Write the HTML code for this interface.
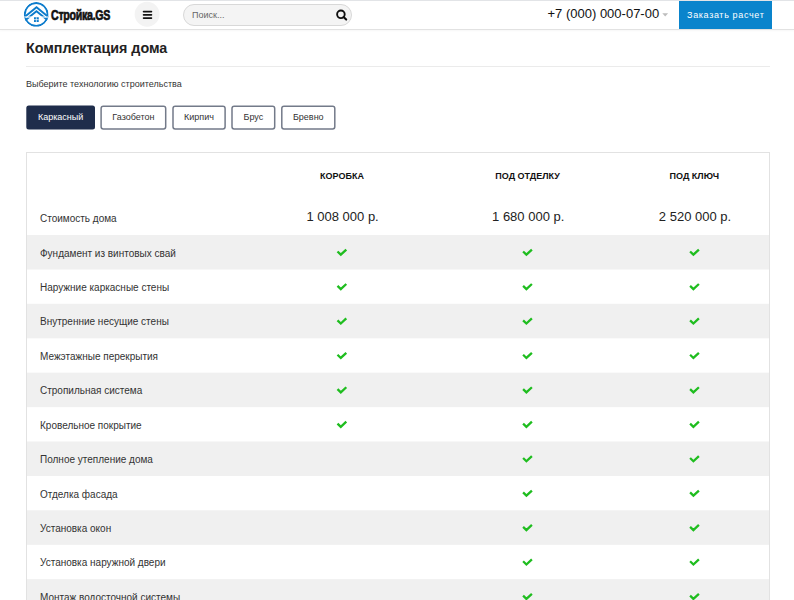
<!DOCTYPE html>
<html><head><meta charset="utf-8">
<style>
*{box-sizing:border-box;margin:0;padding:0}
html,body{width:794px;height:600px;overflow:hidden;background:#fff;font-family:"Liberation Sans",sans-serif;color:#222}
.a{position:absolute;white-space:nowrap}
.hdr{position:absolute;left:0;top:0;width:794px;height:30px;background:#fff;border-top:1px solid #e2e4e7;border-bottom:1px solid #e2e2e2;box-shadow:0 1px 2px rgba(0,0,0,0.035)}
.logo{position:absolute;left:22px;top:0px;width:30px;height:30px}
.logotxt{position:absolute;left:50.6px;top:5.1px;font-weight:bold;font-size:15.4px;line-height:20px;color:#111;transform:scaleX(0.69);transform-origin:0 0;white-space:nowrap;-webkit-text-stroke:0.7px #111;letter-spacing:-0.4px}
.burger{position:absolute;left:134.5px;top:1.8px;width:25.3px;height:25.3px;border-radius:50%;background:#f3f3f3}
.burger i{position:absolute;left:8px;width:9.6px;height:1.7px;border-radius:1px;background:#111}
.search{position:absolute;left:182.5px;top:4px;width:169.5px;height:22px;border:1px solid #d8d8d8;border-radius:11px;background:#f4f4f4}
.search span{position:absolute;left:8.5px;top:4.5px;font-size:9px;line-height:11px;color:#666}
.phone{position:absolute;left:547.5px;top:6px;font-size:13px;line-height:16px;color:#111;white-space:nowrap}
.caret{position:absolute;left:662.3px;top:13.2px;width:0;height:0;border-left:2.9px solid transparent;border-right:2.9px solid transparent;border-top:3.6px solid #b8b8b8}
.order{position:absolute;left:679px;top:1px;width:93px;height:28px;background:#0a84cc;color:#fff;font-size:9px;text-align:center;line-height:28px;letter-spacing:0.65px;padding-left:0.5px}
h1{position:absolute;left:26px;top:39px;font-size:14.3px;line-height:18px;font-weight:bold;color:#222;white-space:nowrap}
.hr{position:absolute;left:26px;top:66px;width:744px;height:1px;background:#ebebeb}
.sub{position:absolute;left:26px;top:79px;font-size:9px;line-height:11px;color:#333;white-space:nowrap}
.tab{position:absolute;top:105.4px;height:24.3px;font-size:9px;line-height:25.2px;text-align:center;color:#333;white-space:nowrap}
.tab.on{color:#fff}
.tbl{position:absolute;left:26px;top:152px;width:744px;height:470px;border:1px solid #e2e2e2;border-bottom:none}
.row{position:absolute;left:0;width:742px;height:34.4px}

.lbl{position:absolute;left:13px;font-size:10px;line-height:12px;color:#333;white-space:nowrap}
.hd{position:absolute;font-size:9px;line-height:11px;font-weight:bold;color:#111;transform:translateX(-50%);white-space:nowrap}
.pr{position:absolute;font-size:13px;line-height:16px;color:#222;transform:translateX(-50%);white-space:nowrap}
.ckw{position:absolute}
.ck{display:block}
.ov{position:absolute;left:0;top:0}
.tbl2{position:absolute;left:27px;top:153px;width:742px;height:460px}

</style></head><body>
<div class="hdr"></div>
<svg class="logo" width="30" height="30" viewBox="0 0 30 30">
  <defs><clipPath id="cc"><circle cx="14.2" cy="14.45" r="12.35"/></clipPath></defs>
  <g clip-path="url(#cc)">
    <circle cx="14.2" cy="14.45" r="11.45" fill="none" stroke="#0d7ccc" stroke-width="1.85"/>
    <path d="M-1 20 L14.5 7.25 L30 20" fill="none" stroke="#0d7ccc" stroke-width="1.9" stroke-linejoin="miter"/>
    <path d="M-1 23.6 L14.5 11.2 L30 23.6" fill="none" stroke="#0d7ccc" stroke-width="1.9" stroke-linejoin="miter"/>
    <rect x="0" y="16.5" width="30" height="1.1" fill="#fff"/>
  </g>
  <rect x="12" y="17.25" width="4.75" height="4.75" fill="#0d7ccc"/>
  <path d="M12 19.6 H16.75 M14.37 17.25 V22" stroke="#fff" stroke-width="0.7"/>
</svg>
<div class="logotxt">Стройка.GS</div>
<svg class="a" style="left:0;top:0" width="200" height="30" viewBox="0 0 200 30"><circle cx="147.1" cy="14.3" r="12.45" fill="#f3f3f3"/><path d="M143.6 11.5 H151.4 M143.6 14.75 H151.4 M143.6 18 H151.4" stroke="#111" stroke-width="1.75" stroke-linecap="round"/></svg>
<div class="search"><span>Поиск...</span>
  <svg style="position:absolute;left:151px;top:4.3px" width="14" height="13" viewBox="0 0 14 13"><circle cx="5.9" cy="5.3" r="3.8" fill="none" stroke="#111" stroke-width="1.9"/><path d="M8.6 8.1 L11.2 10.6" stroke="#111" stroke-width="2.1" stroke-linecap="round"/></svg>
</div>
<div class="phone">+7 (000) 000-07-00</div>
<svg class="a" style="left:661px;top:12px" width="9" height="6" viewBox="0 0 9 6"><path d="M1.3 1.2 H7.1 L4.2 4.6 Z" fill="#bdbdbd"/></svg>
<div class="order">Заказать расчет</div>

<h1>Комплектация дома</h1>
<div class="hr"></div>
<div class="sub">Выберите технологию строительства</div>
<svg class="ov" width="794" height="140" viewBox="0 0 794 140"><rect x="26.30" y="105.60" width="68.70" height="23.90" rx="2.5" fill="#1f2d4b"/><rect x="101.10" y="106.20" width="64.60" height="22.70" rx="2.2" fill="#fff" stroke="#737a89" stroke-width="1.5"/><rect x="173.00" y="106.20" width="52.10" height="22.70" rx="2.2" fill="#fff" stroke="#737a89" stroke-width="1.5"/><rect x="232.00" y="106.20" width="42.70" height="22.70" rx="2.2" fill="#fff" stroke="#737a89" stroke-width="1.5"/><rect x="281.80" y="106.20" width="53.00" height="22.70" rx="2.2" fill="#fff" stroke="#737a89" stroke-width="1.5"/></svg>
<div class="tab on" style="left:26.3px;width:68.7px">Каркасный</div>
<div class="tab" style="left:100.3px;width:66.2px">Газобетон</div>
<div class="tab" style="left:172.2px;width:53.7px">Кирпич</div>
<div class="tab" style="left:231.2px;width:44.3px">Брус</div>
<div class="tab" style="left:281.0px;width:54.6px">Бревно</div>


<div class="tbl"></div>
<svg class="ov" width="794" height="600" viewBox="0 0 794 600"><g fill="#f0f0f0"><rect x="27" y="234.95" width="742" height="34.55"/><rect x="27" y="303.79" width="742" height="34.55"/><rect x="27" y="372.63" width="742" height="34.55"/><rect x="27" y="441.47" width="742" height="34.55"/><rect x="27" y="510.31" width="742" height="34.55"/><rect x="27" y="579.15" width="742" height="34.55"/></g></svg>
<div class="tbl2">
<div class="hd" style="left:315px;top:18px">КОРОБКА</div>
<div class="hd" style="left:500.6px;top:18px">ПОД ОТДЕЛКУ</div>
<div class="hd" style="left:667.4px;top:18px">ПОД КЛЮЧ</div>
<div class="lbl" style="top:60.3px">Стоимость дома</div>
<div class="pr" style="left:315.6px;top:56px">1 008 000 р.</div>
<div class="pr" style="left:501.20000000000005px;top:56px">1 680 000 р.</div>
<div class="pr" style="left:668.0px;top:56px">2 520 000 р.</div>
<div class="row" style="top:82.00px">
<div class="lbl" style="top:12.6px">Фундамент из винтовых свай</div>
</div>
<div class="row" style="top:116.42px">
<div class="lbl" style="top:12.6px">Наружние каркасные стены</div>
</div>
<div class="row" style="top:150.84px">
<div class="lbl" style="top:12.6px">Внутренние несущие стены</div>
</div>
<div class="row" style="top:185.26px">
<div class="lbl" style="top:12.6px">Межэтажные перекрытия</div>
</div>
<div class="row" style="top:219.68px">
<div class="lbl" style="top:12.6px">Стропильная система</div>
</div>
<div class="row" style="top:254.10px">
<div class="lbl" style="top:12.6px">Кровельное покрытие</div>
</div>
<div class="row" style="top:288.52px">
<div class="lbl" style="top:12.6px">Полное утепление дома</div>
</div>
<div class="row" style="top:322.94px">
<div class="lbl" style="top:12.6px">Отделка фасада</div>
</div>
<div class="row" style="top:357.36px">
<div class="lbl" style="top:12.6px">Установка окон</div>
</div>
<div class="row" style="top:391.78px">
<div class="lbl" style="top:12.6px">Установка наружной двери</div>
</div>
<div class="row" style="top:426.20px">
<div class="lbl" style="top:12.6px">Монтаж водосточной системы</div>
</div>
</div>
<svg class="ov" width="794" height="600" viewBox="0 0 794 600"><path d="M337.50 251.50 L340.80 254.70 L346.30 249.60 M523.10 251.50 L526.40 254.70 L531.90 249.60 M690.10 251.50 L693.40 254.70 L698.90 249.60 M337.50 285.92 L340.80 289.12 L346.30 284.02 M523.10 285.92 L526.40 289.12 L531.90 284.02 M690.10 285.92 L693.40 289.12 L698.90 284.02 M337.50 320.34 L340.80 323.54 L346.30 318.44 M523.10 320.34 L526.40 323.54 L531.90 318.44 M690.10 320.34 L693.40 323.54 L698.90 318.44 M337.50 354.76 L340.80 357.96 L346.30 352.86 M523.10 354.76 L526.40 357.96 L531.90 352.86 M690.10 354.76 L693.40 357.96 L698.90 352.86 M337.50 389.18 L340.80 392.38 L346.30 387.28 M523.10 389.18 L526.40 392.38 L531.90 387.28 M690.10 389.18 L693.40 392.38 L698.90 387.28 M337.50 423.60 L340.80 426.80 L346.30 421.70 M523.10 423.60 L526.40 426.80 L531.90 421.70 M690.10 423.60 L693.40 426.80 L698.90 421.70 M523.10 458.02 L526.40 461.22 L531.90 456.12 M690.10 458.02 L693.40 461.22 L698.90 456.12 M523.10 492.44 L526.40 495.64 L531.90 490.54 M690.10 492.44 L693.40 495.64 L698.90 490.54 M523.10 526.86 L526.40 530.06 L531.90 524.96 M690.10 526.86 L693.40 530.06 L698.90 524.96 M523.10 561.28 L526.40 564.48 L531.90 559.38 M690.10 561.28 L693.40 564.48 L698.90 559.38 M523.10 595.70 L526.40 598.90 L531.90 593.80 M690.10 595.70 L693.40 598.90 L698.90 593.80" fill="none" stroke="#1fbd1f" stroke-width="2.3"/></svg>
</body></html>
